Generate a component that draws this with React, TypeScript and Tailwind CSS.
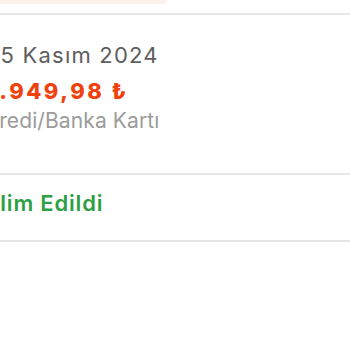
export default function App() {
  return (
    <div className="w-[350px] h-[350px] bg-white overflow-hidden relative" style={{ fontFamily: "Inter, 'Noto Sans', sans-serif" }}>
      <div className="h-[4px] w-[166px] bg-[#fdf1e9]" />
      <div className="h-[9px]" />
      <div className="h-[2px] bg-[#e6e6e6]" />
      <div className="pt-[26px] flex flex-col">
        <div className="ml-[-14px] text-[22px] leading-[28px] tracking-[1.2px] text-[#5e5e5e]">25 Kasım 2024</div>
        <div className="ml-[-13px] mt-[8px] text-[22px] leading-[28px] tracking-[2.5px] font-extrabold text-[#f0420f]">1.949,98 ₺</div>
        <div className="ml-[-15px] mt-[2px] text-[21px] leading-[28px] tracking-[0.1px] text-[#9b9b9b]">Kredi/Banka Kartı</div>
      </div>
      <div className="mt-[38px] h-[2px] bg-[#e6e6e6]" />
      <div className="pt-[14px] ml-[-40px] text-[22px] leading-[28px] tracking-[0.8px] font-semibold text-[#2ea043]">Teslim Edildi</div>
      <div className="mt-[23px] h-[2px] bg-[#e6e6e6]" />
    </div>
  );
}
